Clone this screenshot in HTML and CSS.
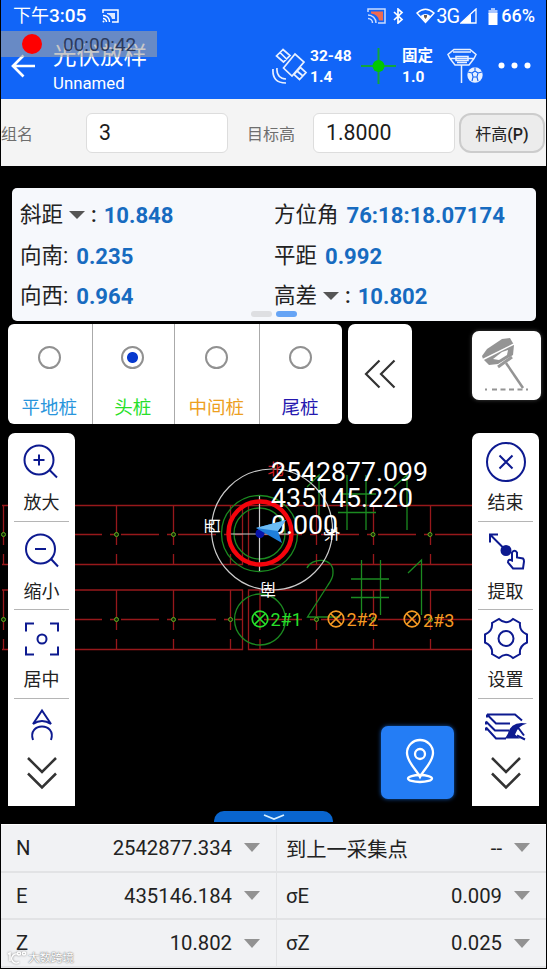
FILE: index.html
```
<!DOCTYPE html>
<html lang="zh-CN">
<head>
    <meta charset="UTF-8">
    <meta name="viewport" content="width=device-width, initial-scale=1.0">
    <title>光伏放样</title>
    <link rel="stylesheet" href="styles.css">
</head>
<body>
<div class="screen">
    <header class="header">
        <div class="status-bar">
            <span class="clock">下午<b>3:05</b></span>
            <svg class="cast" width="17" height="14" viewBox="0 0 17 14" fill="none" stroke="#fff" stroke-width="1.5"><path d="M1 4V1h15v12h-6M1 6.5a6 6 0 0 1 6.500 6.500M1 9.500a3.500 3.500 0 0 1 3.500 3.500"/><path d="M5 4h8v6h-3q-1-4-5-5z" fill="#dce7ff" stroke="none"/><circle cx="1.500" cy="12.500" r="1" fill="#fff" stroke="none"/></svg>
            <div class="status-icons">
                <svg width="19" height="16" viewBox="0 0 19 16" fill="none" stroke="#c9dcff" stroke-width="1.5"><path d="M1 4V1h17v14h-7M1 7a8 8 0 0 1 8 8M1 10.500a4.500 4.500 0 0 1 4.500 4.500"/><path d="M4 3.500h12v9h-4q-1-6-8-7z" fill="#ef6a50" stroke="none"/></svg>
                <svg class="bluetooth" width="12" height="16" viewBox="0 0 12 16" fill="none" stroke="#fff" stroke-width="1.700"><path d="M2 4l8 7.500L6 15V1l4 3.500L2 12"/></svg>
                <svg width="19" height="16" viewBox="0 0 19 16"><path d="M1 5Q9.500-2.500 18 5L9.500 14.500z" fill="none" stroke="#fff" stroke-width="1.500"/><path d="M4.500 8Q9.500 4 14.500 8l-5 6.500z" fill="#fff"/><path d="M8 7h3v2l-1.500 2L8 9z" fill="#6b5a50"/></svg>
                <span class="net">3G</span>
                <svg width="17" height="16" viewBox="0 0 17 16"><path d="M1 15L16 1v14z" fill="none" stroke="#fff" stroke-width="1.300"/><path d="M1 15L11 6v9z" fill="#fff"/></svg>
                <svg class="battery" width="10" height="17" viewBox="0 0 10 17"><path d="M3 0h4v2h2.500v4h-9V2H3z" fill="#a9c6ff"/><path d="M.5 5h9v12h-9z" fill="#fff"/></svg>
                <b class="percent">66%</b>
            </div>
        </div>
        <div class="toolbar">
            <svg class="back" width="25" height="24" viewBox="0 0 25 24" fill="none" stroke="#fff" stroke-width="2.700"><path d="M12.500 1.500L2 12l10.500 10.500M2 12h22"/></svg>
            <div class="title">
                <h1>光伏放样</h1>
                <p>Unnamed</p>
            </div>
            <svg class="satellite" width="36" height="36" viewBox="0 0 36 36" fill="none" stroke="#e8f0ff" stroke-width="1.700"><path d="M11.500 20L23 6l9 8L20 28zM11 1.500l-6.500 6.500 7 6 6.500-6.500zM28.500 19.500l-6.500 7 5.500 5 6.500-7zM8 4.500l7 7M25 23l6 5M5 20q-1 10 9 11M1 21q-1 14 13 14"/></svg>
            <div class="stat sat-stat"><b>32-48</b><b>1.4</b></div>
            <svg class="cross" width="35" height="36" viewBox="0 0 35 36" stroke="#12a63c" stroke-width="2"><path d="M0 18h35M17.500 0v36"/><circle cx="17.500" cy="18" r="6" fill="#00c800" stroke="none"/></svg>
            <div class="stat fix-stat"><b>固定</b><b>1.0</b></div>
            <svg class="receiver" width="37" height="36" viewBox="0 0 37 36" fill="none" stroke="#e8f0ff" stroke-width="1.500"><path d="M7 1.500h16l6 5-2 4H3l-2-4zM3 10.500L8 17h14l5-6.500M9 8.500h12v4H9zM10 14.500h10M6 4h18M14.500 17v18"/><circle cx="28" cy="27" r="7.700" fill="#e8f0ff" stroke="none"/><path d="M25 25l3-2 3 2-1 4h-4zM28 19.500V23M21 24l4 1M35 24l-4 1M25 33l1-4M31 33l-1-4" stroke="#1464f4" stroke-width="1.100"/></svg>
            <svg class="more" width="33" height="7" viewBox="0 0 33 7" fill="#fff"><circle cx="3.500" cy="3.500" r="3"/><circle cx="16.500" cy="3.500" r="3"/><circle cx="29.500" cy="3.500" r="3"/></svg>
        </div>
        <div class="recorder"><i></i><span>00:00:42</span></div>
    </header>

    <div class="form">
        <label class="group-label">组名</label>
        <div class="field">3</div>
        <label class="height-label">目标高</label>
        <div class="field">1.8000</div>
        <button class="pole-button">杆高<b>(P)</b></button>
    </div>

    <main class="map">
        <!-- CAD 底图, 坐标与屏幕一致 -->
        <svg class="canvas" width="545" height="657" viewBox="1 167 545 657" fill="none">
            <g stroke="#97181b" stroke-width="1.300">
                <path d="M2 505.500H242.500V564.500H2M472 505.500H248.500V564.500H472M2 590H242.500V649.500H2M472 590H248.500V649.500H472"/>
                <path d="M3.500 505v40m0 9v10M116.500 505v40m0 9v10M173.500 505v40m0 9v10M230.500 505v40m0 9v10M316.500 505v40m0 9v10M373.500 505v40m0 9v10M430.500 505v40m0 9v10"/>
                <path d="M3.500 590v40m0 9v10M116.500 590v40m0 9v10M173.500 590v40m0 9v10M230.500 590v40m0 9v10M260 590v40m0 9v10M316.500 590v40m0 9v10M373.500 590v40m0 9v10M430.500 590v40m0 9v10"/>
                <path d="M64 534.500H242M264 534.500H472M64 619.500H242M264 619.500H472" stroke-dasharray="38 8 7 4"/>
            </g>
            <g stroke="#1b8a20" stroke-width="1.300">
                <path d="M307 568C311 558 334 556 333 573Q333 578 328 585L307.500 617H340M361.500 560v55M380.500 560v55M351 579h38M351 597.500h38M408 573l13.500-13v55"/>
                <path d="M347 475v55M366 475v55M338 494h38M338 512.500h38M394 487l13-12v55M307 487l12-12v40"/>
                <circle cx="259.500" cy="533.500" r="38"/>
                <circle cx="259.500" cy="533.500" r="25.500"/>
                <circle cx="260" cy="619.500" r="25.500"/>
            </g>
            <g fill="#102c05" stroke="#5fae20">
                <circle cx="3.500" cy="534.500" r="2"/><circle cx="116.500" cy="534.500" r="2"/><circle cx="173.500" cy="534.500" r="2"/><circle cx="373" cy="534.500" r="2"/><circle cx="430" cy="534.500" r="2"/>
                <circle cx="3.500" cy="619.500" r="2"/><circle cx="116.500" cy="619.500" r="2"/><circle cx="173.500" cy="619.500" r="2"/><circle cx="230.500" cy="619.500" r="2"/><circle cx="316.500" cy="619.500" r="2"/><circle cx="373.500" cy="619.500" r="2"/><circle cx="430.500" cy="619.500" r="2"/>
            </g>
            <circle cx="272" cy="529.500" r="60.500" stroke="#ccc" stroke-width="1.200"/>
            <path d="M227 534h65M259.500 496v75" stroke="#ccc" stroke-width="1.200"/>
            <circle cx="260" cy="533" r="31.500" stroke="#f5040c" stroke-width="4.500"/>
            <g class="compass">
                <text x="275.500" y="474.500" fill="#d01c24">北</text>
                <text transform="translate(218 526) rotate(-90)" fill="#fff">西</text>
                <text transform="translate(268 583.500) rotate(180)" fill="#fff">南</text>
                <text transform="translate(326 534) rotate(90)" fill="#fff">东</text>
            </g>
            <g class="coords">
                <text x="271" y="480.500">2542877.099</text>
                <text x="271" y="507">435145.220</text>
                <text x="271" y="534">0.000</text>
            </g>
            <circle cx="260" cy="533.500" r="4.500" fill="#0713aa"/>
            <path d="M256 528l30-8-8 11 4 12z" fill="#1f7fdc"/>
            <path d="M256 528l30-8-8 11z" fill="#6cbcf5"/>
            <g class="pile-mark" stroke="#27df2a"><circle cx="260" cy="619" r="7.800"/><path d="M254.500 613.500l11 11m0-11l-11 11"/><text x="270.500" y="626" fill="#27df2a">2#1</text></g>
            <g class="pile-mark" stroke="#f59a23"><circle cx="336" cy="619" r="7.800"/><path d="M330.500 613.500l11 11m0-11l-11 11"/><text x="346.500" y="626" fill="#f59a23">2#2</text></g>
            <g class="pile-mark" stroke="#f59a23"><circle cx="412" cy="619" r="7.800"/><path d="M406.500 613.500l11 11m0-11l-11 11"/><text x="423" y="626.500" fill="#f59a23">2#3</text></g>
        </svg>

        <section class="info">
            <div>斜距<i class="caret"></i><span class="colon">:</span><b>10.848</b></div>
            <div>方位角<b>76:18:18.07174</b></div>
            <div>向南:<b>0.235</b></div>
            <div>平距<b>0.992</b></div>
            <div>向西:<b>0.964</b></div>
            <div>高差<i class="caret"></i><span class="colon">:</span><b>10.802</b></div>
            <div class="pager"><i></i><i class="active"></i></div>
        </section>

        <div class="piles">
            <div class="pile-types">
                <div class="flat"><i class="radio"></i>平地桩</div>
                <div class="head"><i class="radio checked"></i>头桩</div>
                <div class="middle"><i class="radio"></i>中间桩</div>
                <div class="tail"><i class="radio"></i>尾桩</div>
            </div>
            <div class="collapse">
                <svg width="32" height="30" viewBox="0 0 32 30" fill="none" stroke="#333" stroke-width="2.200"><path d="M15.500 1.500L2 15l13.500 13.500M30.500 1.500L17 15l13.500 13.500"/></svg>
            </div>
            <div class="tilt">
                <svg width="54" height="56" viewBox="0 0 54 56"><path d="M2 18L7 11 22 1l8-1 4 7-1 10-15 9-9 1-6-6z" fill="#949494"/><path d="M3 21.500L34 6" stroke="#fff" stroke-width="1.500"/><path d="M13 21l9-7 6-2-1 5-8 5z" fill="#fff"/><path d="M18 29l14-10" stroke="#999" stroke-width="3"/><path d="M26 25l17 25" stroke="#949494" stroke-width="2.500"/><path d="M5 51.500h46" stroke="#949494" stroke-width="2" stroke-dasharray="2 5 5 3.500 5 3.500 5 3.500 5 3.500 2 3"/></svg>
            </div>
        </div>

        <div class="workspace">
            <nav class="side">
                <div class="tool">
                    <svg width="36" height="36" viewBox="0 0 36 36"><circle cx="15" cy="16.500" r="14.500"/><path d="M9.500 16.500h11M15 11v11M25.500 26.500l7.500 7.500"/></svg>
                    <span>放大</span>
                </div>
                <div class="tool">
                    <svg width="36" height="36" viewBox="0 0 36 36"><circle cx="16.500" cy="16.500" r="14.500"/><path d="M11 16.500h11M27 26.500l7 7.500"/></svg>
                    <span>缩小</span>
                </div>
                <div class="tool">
                    <svg width="36" height="36" viewBox="0 0 36 36"><path d="M2 11V3h8M26 3h8v8M34 26v8h-8M10 34H2v-8"/><circle cx="18" cy="18.500" r="4.500"/></svg>
                    <span>居中</span>
                </div>
                <div class="tool last">
                    <svg width="36" height="36" viewBox="0 0 36 36"><path d="M18 1l-9 13.500q9-6 18 0zM9 30.500c-6-18 24-18 18 0"/></svg>
                </div>
                <svg class="expand" width="32" height="34" viewBox="0 0 32 34"><path d="M2 2l14 14L30 2M2 17.500l14 14 14-14"/></svg>
            </nav>

            <button class="locate">
                <svg width="30" height="46" viewBox="0 0 30 46" fill="none" stroke="#fff" stroke-width="2.300"><path d="M15 39C11 31 2 24 2 15a13 13 0 0 1 26 0c0 9-9 16-13 24z"/><circle cx="15" cy="16" r="5"/><ellipse cx="15" cy="40.500" rx="12" ry="3.500"/></svg>
            </button>

            <nav class="side">
                <div class="tool">
                    <svg width="40" height="40" viewBox="0 0 40 40"><circle cx="20" cy="20.500" r="19"/><path d="M13.500 14l13 13m0-13l-13 13"/></svg>
                    <span>结束</span>
                </div>
                <div class="tool">
                    <svg width="38" height="38" viewBox="0 0 38 38"><path d="M3 11V3h8M3 3l15 15"/><circle cx="19" cy="19" r="4.500" fill="#0d1a90"/><path d="M25 29V21q2.500-3.500 5 0v5l6 1q1 1 1 3l-1 7H26l-5-6q0-4 4-2z"/></svg>
                    <span>提取</span>
                </div>
                <div class="tool">
                    <svg width="44" height="42" viewBox="0 0 44 42"><path d="M15 1.500Q22 8 29 1.500L36 5.500Q35 13.500 43 17V25Q35 28.500 36 36.500L29 40.500Q22 34 15 40.500L8 36.500Q9 28.500 1 25V17Q9 13.500 8 5.500L15 1.500z"/><circle cx="22" cy="21" r="7.500"/></svg>
                    <span>设置</span>
                </div>
                <div class="tool last">
                    <svg width="44" height="30" viewBox="0 0 44 30"><path d="M3 2h28l7 6M3 2l9 9h14M2 9l9 9h14M2 15l10 11h10M3 2v3M2 9v3M2 15v3"/><path d="M21 26h15l-5-4q3-9 12-11-16-3-19 10z" fill="#0d1a90" stroke="none"/><path d="M34 15l6 8M33 23l8 4" stroke-width="2"/></svg>
                </div>
                <svg class="expand" width="32" height="34" viewBox="0 0 32 34"><path d="M2 2l14 14L30 2M2 17.500l14 14 14-14"/></svg>
            </nav>
        </div>

        <div class="drawer">
            <svg width="22" height="6" viewBox="0 0 22 6" fill="none" stroke="#d8f0ff" stroke-width="1.800"><path d="M1 1l10 4 10-4"/></svg>
        </div>
    </main>

    <footer class="table">
        <div class="cell"><span>N</span><span class="value">2542877.334</span><i class="caret"></i></div>
        <div class="cell"><span>到上一采集点</span><span class="value">--</span><i class="caret"></i></div>
        <div class="cell"><span>E</span><span class="value">435146.184</span><i class="caret"></i></div>
        <div class="cell"><span>σE</span><span class="value">0.009</span><i class="caret"></i></div>
        <div class="cell"><span>Z</span><span class="value">10.802</span><i class="caret"></i></div>
        <div class="cell"><span>σZ</span><span class="value">0.025</span><i class="caret"></i></div>
        <div class="watermark">
            <svg width="20" height="14" viewBox="0 0 20 14" fill="none" stroke="#fff" stroke-width="1.500"><path d="M1 3l2-1v8M12 11a4.500 4.500 0 1 1 0-7"/><circle cx="12" cy="2.500" r="1.500"/><circle cx="17" cy="2.500" r="1.500"/></svg>
            <span>大数跨境</span>
        </div>
    </footer>
</div>
</body>
</html>
```
FILE: styles.css
```
:root {
    --blue: #1165f8;
    --value: #176bc0;
    --navy: #0d1a90;
}

* {
    box-sizing: border-box;
}

body {
    margin: 0;
    background: #000;
    font-family: Roboto, "Noto Sans CJK SC", sans-serif;
    color: #222;
}

h1, p {
    margin: 0;
    font-weight: normal;
}

svg {
    display: block;
    flex: none;
}

.screen {
    width: 545px;
    height: 969px;
    margin-left: 1px;
    display: flex;
    flex-direction: column;
    overflow: hidden;
    white-space: nowrap;
}

/* 顶部蓝色栏 */
.header {
    position: relative;
    height: 99px;
    background: var(--blue);
    color: #fff;
}

.status-bar {
    display: flex;
    align-items: center;
    height: 32px;
    padding-left: 12px;
}

.clock {
    font-size: 18px;
    line-height: 30px;
    width: 89px;
}

.clock b {
    font-weight: 500;
    font-size: 19px;
}

.status-icons {
    display: flex;
    align-items: center;
    margin-left: auto;
    padding-right: 11px;
}

.bluetooth {
    margin: 0 12px 0 6px;
}

.net {
    font-size: 20px;
    line-height: 30px;
    width: 24px;
    margin-left: 1px;
    letter-spacing: -1px;
}

.battery {
    margin-left: 11px;
}

.percent {
    font-size: 18px;
    font-weight: 500;
    line-height: 30px;
    margin-left: 3px;
}

.toolbar {
    display: flex;
    align-items: center;
    height: 67px;
}

.back {
    margin-left: 10px;
}

.title {
    flex: none;
    width: 235px;
    padding: 5px 0 0 17px;
}

.title h1 {
    font-size: 23.5px;
    line-height: 29px;
}

.title p {
    font-size: 16.8px;
    line-height: 24px;
}

.satellite {
    margin-left: 1px;
}

.stat {
    display: flex;
    flex: none;
    flex-direction: column;
    padding-top: 2px;
    font-size: 15.5px;
    line-height: 21px;
}

.sat-stat {
    width: 49px;
    margin-left: 2px;
}

.fix-stat {
    width: 44px;
    margin-left: 6px;
}

.cross {
    margin-left: 2px;
}

.receiver {
    margin-left: 1px;
}

.more {
    margin-left: 14px;
}

.recorder {
    position: absolute;
    left: 0;
    top: 31px;
    width: 156px;
    height: 26px;
    display: flex;
    align-items: center;
    background: rgba(164, 164, 164, 0.6);
    color: #2b3a5c;
    font-size: 19px;
}

.recorder i {
    width: 20px;
    height: 20px;
    margin: 0 21px;
    border-radius: 50%;
    background: #f00;
}

/* 输入行 */
.form {
    display: flex;
    align-items: center;
    height: 67px;
    background: #f4f4f4;
    color: #6e6e6e;
    font-size: 16px;
}

.group-label {
    width: 85px;
}

.height-label {
    width: 85px;
    padding-left: 19px;
}

.field {
    width: 142px;
    height: 40px;
    padding-left: 12px;
    border: 1px solid #ddd;
    border-radius: 6px;
    background: #fff;
    color: #1c1c1c;
    font-size: 21.3px;
    line-height: 38px;
}

.pole-button {
    flex: none;
    width: 86px;
    height: 40px;
    margin-left: 4px;
    padding: 0;
    border: 2px solid #ccc;
    border-radius: 12px;
    background: #ececec;
    color: #222;
    font: 16px Roboto, "Noto Sans CJK SC", sans-serif;
}

.pole-button b {
    font-weight: 500;
}

/* 地图区域 */
.map {
    position: relative;
    display: flex;
    flex-direction: column;
    height: 657px;
    margin-top: 1px;
    padding-top: 21px;
    background: #000;
}

.canvas {
    position: absolute;
    left: 0;
    top: 0;
}

.compass text {
    font-size: 16px;
    text-anchor: middle;
}

.coords text {
    font-size: 26.7px;
    fill: #fff;
}

.pile-mark {
    stroke-width: 1.7;
}

.pile-mark text {
    font-size: 18px;
    stroke: none;
}

.info {
    position: relative;
    display: grid;
    grid-template-columns: 254px auto;
    grid-auto-rows: 40.5px;
    width: 524px;
    height: 133px;
    margin-left: 11px;
    padding: 7px 0 0 8px;
    border-radius: 5px;
    background: #f6f8fc;
    font-size: 21.5px;
    line-height: 38px;
}

.info > div:not(.pager) {
    display: flex;
    align-items: center;
}

.info b {
    margin-left: 8px;
    color: var(--value);
    font-size: 22.1px;
}

.caret {
    border: 8px solid transparent;
    border-top-color: #555;
    border-bottom: 0;
}

.info .caret {
    margin-left: 6px;
}

.colon {
    margin-left: 6px;
    font-weight: 500;
}

.info .colon + b {
    margin-left: 7px;
}

.pager {
    position: absolute;
    left: 239px;
    bottom: 4px;
    display: flex;
    gap: 4px;
}

.pager i {
    width: 21px;
    height: 6px;
    border-radius: 3px;
    background: #dedfe2;
}

.pager .active {
    background: #66a4f5;
}

.piles {
    position: relative;
    display: flex;
    height: 100px;
    margin: 3px 0 0 7px;
}

.pile-types {
    display: grid;
    grid-template-columns: 84.5px 82.5px 84.5px 82px;
    border-radius: 6px;
    background: #fff;
    overflow: hidden;
}

.pile-types > div {
    display: flex;
    flex-direction: column;
    align-items: center;
    padding: 22px 1px 0 0;
    border-right: 1px solid #aaa;
    font-size: 18.5px;
    line-height: 26px;
}

.pile-types > div:last-child {
    border: 0;
}

.radio {
    width: 23px;
    height: 23px;
    margin-bottom: 26px;
    border: 2px solid #919191;
    border-radius: 50%;
}

.radio.checked {
    background: radial-gradient(circle, #0739ce 5px, #fff 6px);
}

.flat { color: #2995dc; }
.head { color: #27df2a; }
.middle { color: #eda01f; }
.tail { color: #2518af; }

.collapse {
    display: flex;
    align-items: center;
    justify-content: center;
    width: 64px;
    margin-left: 6px;
    border-radius: 7px;
    background: #fff;
}

.tilt {
    width: 69px;
    height: 69px;
    margin: 7px 0 0 60px;
    padding: 7px 0 0 8px;
    border-radius: 7px;
    background: #fff;
    box-shadow: 0 0 4px #444;
}

.workspace {
    position: relative;
    display: flex;
    height: 373px;
    margin: 9px 0 0 7px;
}

.side {
    width: 67px;
    padding: 0 6px;
    border-radius: 7px 7px 0 0;
    background: #fff;
}

.tool {
    display: flex;
    flex-direction: column;
    align-items: center;
    height: 88.5px;
    border-bottom: 1px solid #b5b5b5;
    font-size: 18px;
}

.side .tool svg {
    height: 57px;
    overflow: visible;
}

.tool svg, .expand {
    fill: none;
    stroke: var(--navy);
    stroke-width: 2;
}

.tool span {
    line-height: 26px;
}

.tool.last {
    height: 52px;
    border: 0;
}

.expand {
    margin: 5px auto 0;
    stroke: #333;
    stroke-width: 2.5;
}

.locate {
    display: flex;
    align-items: center;
    justify-content: center;
    width: 73px;
    height: 73px;
    margin: 293px 18px 0 306px;
    padding: 0 0 3px 4px;
    border: 0;
    border-radius: 7px;
    background: #247df5;
    box-shadow: 0 0 4px #1255ad;
}

.drawer {
    position: relative;
    display: flex;
    justify-content: center;
    width: 119px;
    height: 11px;
    margin: 5px 0 0 213px;
    padding-top: 3px;
    border-radius: 10px 10px 0 0;
    background: #0965ce;
}

/* 底部坐标表 */
.table {
    position: relative;
    display: grid;
    grid-template-columns: 275px 270px;
    grid-auto-rows: 47.7px;
    height: 144px;
    border-top: 1px solid #fff;
    background: #f1f2f4;
}

.cell {
    display: flex;
    align-items: center;
    padding: 0 16px 0 15px;
    border-bottom: 2px solid #e2e3e5;
    font-size: 20.3px;
}

.cell:nth-child(even) {
    padding-left: 9px;
    border-left: 1px solid #e2e3e5;
}

.value {
    margin-left: auto;
}

.cell .caret {
    margin-left: 12px;
    border-width: 9px 8.5px 0;
    border-top-color: #929292;
}

.watermark {
    position: absolute;
    left: 6px;
    bottom: 2px;
    display: flex;
    align-items: center;
    gap: 1px;
    color: #fff;
    font-size: 11.5px;
    line-height: 16px;
    text-shadow: 0 0 1px #777, 0 0 2px #888;
}

.watermark svg {
    filter: drop-shadow(0 0 1px #888);
}
```
